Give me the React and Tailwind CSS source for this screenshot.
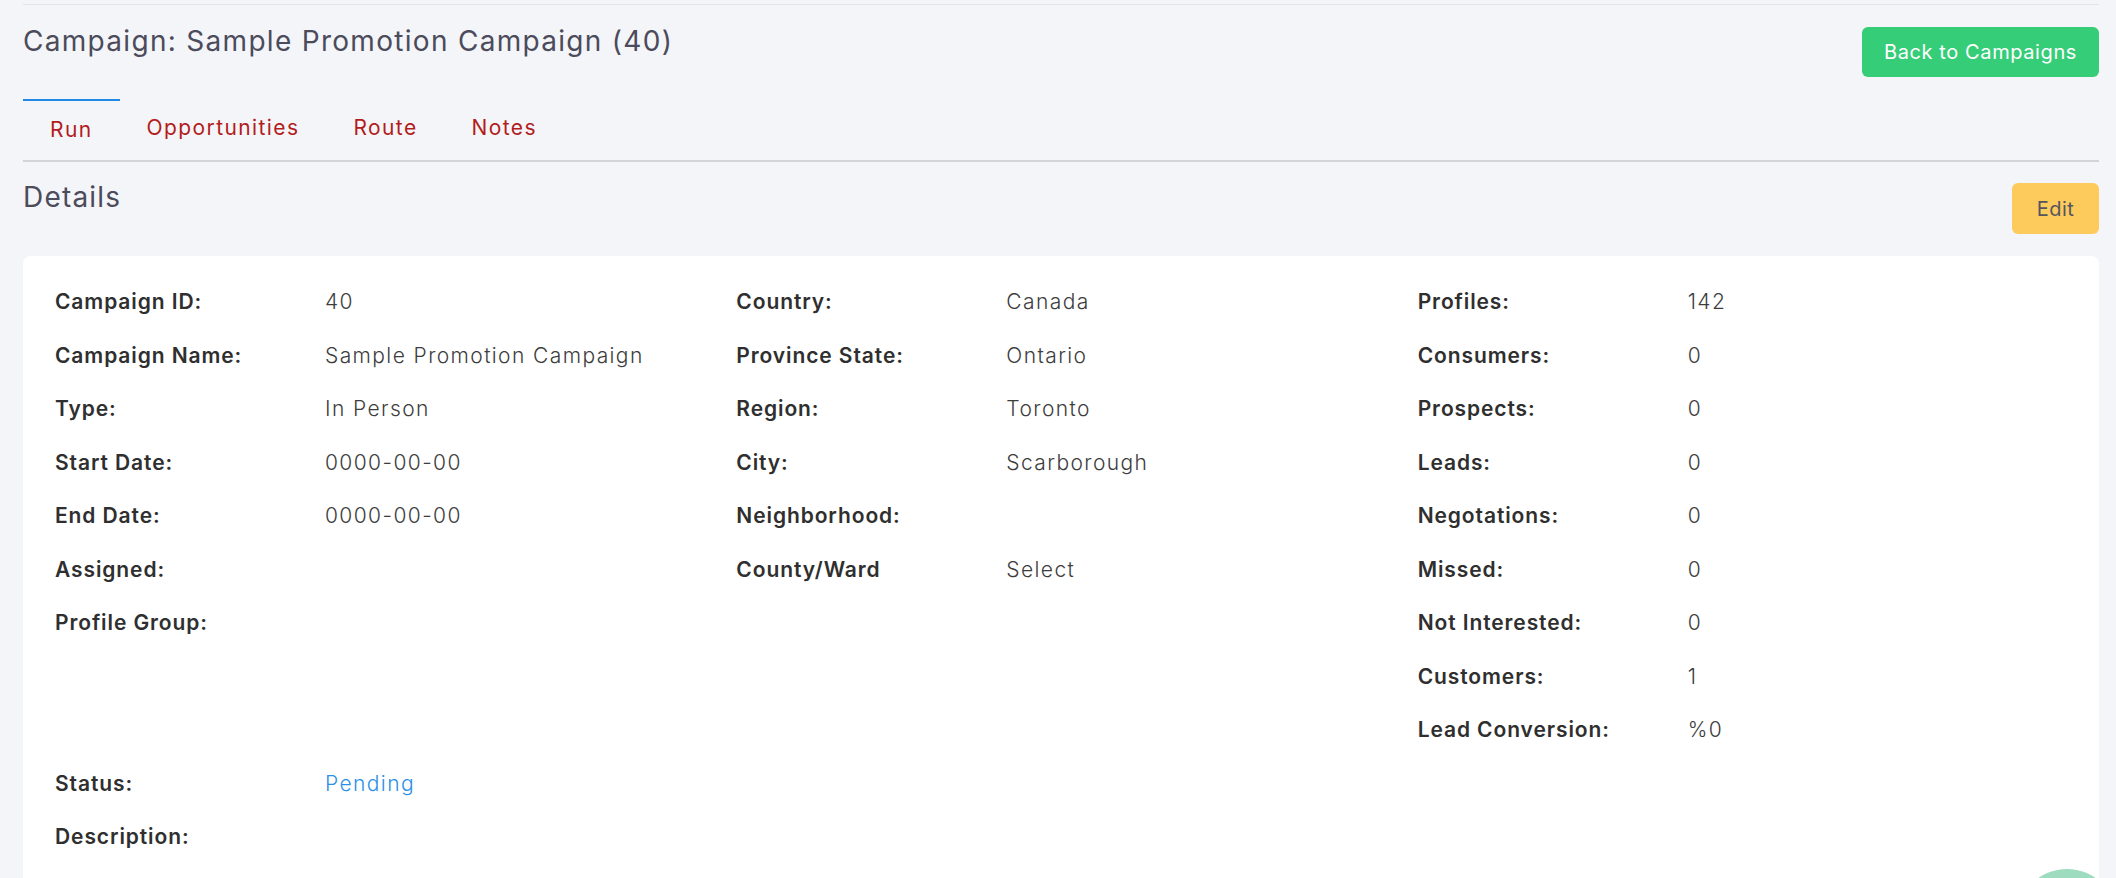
import React from 'react';

const col1 = [
  ['Campaign ID:', '40'],
  ['Campaign Name:', 'Sample Promotion Campaign'],
  ['Type:', 'In Person'],
  ['Start Date:', '0000-00-00'],
  ['End Date:', '0000-00-00'],
  ['Assigned:', ''],
  ['Profile Group:', ''],
];

const col2 = [
  ['Country:', 'Canada'],
  ['Province State:', 'Ontario'],
  ['Region:', 'Toronto'],
  ['City:', 'Scarborough'],
  ['Neighborhood:', ''],
  ['County/Ward', 'Select'],
];

const col3 = [
  ['Profiles:', '142'],
  ['Consumers:', '0'],
  ['Prospects:', '0'],
  ['Leads:', '0'],
  ['Negotations:', '0'],
  ['Missed:', '0'],
  ['Not Interested:', '0'],
  ['Customers:', '1'],
  ['Lead Conversion:', '%0'],
];

const tabs = ['Run', 'Opportunities', 'Route', 'Notes'];

function Row({ label, value, valueClass = 'text-[#3d3d3d]' }) {
  return (
    <div className="grid grid-cols-[270px_1fr] items-center h-[53.5px]">
      <div className="text-[21px] tracking-[0.9px] font-semibold text-[#2f2f2f]">{label}</div>
      <div className={`text-[21px] tracking-[1.4px] font-light ${valueClass}`}>{value}</div>
    </div>
  );
}

function Column({ rows }) {
  return (
    <div className="px-4">
      {rows.map(([label, value]) => (
        <Row key={label} label={label} value={value} />
      ))}
    </div>
  );
}

export default function App() {
  return (
    <div className="relative min-h-screen overflow-hidden bg-[#f4f5f8] font-['Inter','Liberation_Sans',sans-serif]">
      <div className="pl-[23px] pr-[17px]">
        <div className="h-[4px]" />
        <div className="border-t border-[#e4e5e9]" />

        {/* header */}
        <div className="flex justify-between items-start">
          <h1 className="mt-[19px] text-[28px] leading-[34px] tracking-[1.3px] font-normal text-[#4b4b5c]">
            Campaign: Sample Promotion Campaign (40)
          </h1>
          <button className="mt-[22px] h-[50px] w-[237px] rounded-[6px] bg-[#35cd78] text-white text-[20px] tracking-[0.6px]">
            Back to Campaigns
          </button>
        </div>

        {/* tabs */}
        <div className="mt-[22px] flex border-b-2 border-[#d4d4d8]">
          {tabs.map((t, i) => (
            <div
              key={t}
              className={`h-[61px] flex items-center px-[27px] pb-[5px] text-[21px] tracking-[1.4px] text-[#b31c1c] border-t-2 ${
                i === 0 ? 'border-[#2189e3]' : 'border-transparent'
              }`}
            >
              <span className={i === 0 ? 'mt-[3px]' : ''}>{t}</span>
            </div>
          ))}
        </div>

        {/* details header */}
        <div className="mt-[20px] flex justify-between items-start">
          <h2 className="mt-[-2px] text-[28px] leading-[34px] tracking-[1.2px] text-[#4b4b5c]">Details</h2>
          <button className="mt-[1px] h-[51px] w-[87px] rounded-[6px] bg-[#fccb5c] text-[#555560] text-[20px] tracking-[0.5px]">
            Edit
          </button>
        </div>

        {/* card */}
        <div className="mt-[22px] rounded-[8px] bg-white px-4 pt-[19px] pb-10">
          <div className="grid grid-cols-3">
            <Column rows={col1} />
            <Column rows={col2} />
            <Column rows={col3} />
          </div>
          <div className="grid grid-cols-3">
            <div className="px-4">
              <Row label="Status:" value="Pending" valueClass="text-[#2a8fe8]" />
              <Row label="Description:" value="" />
            </div>
          </div>
        </div>
      </div>

      {/* floating button */}
      <div className="absolute left-[2017px] top-[869px] w-[100px] h-[100px] rounded-full bg-[#9edcc0]" />
    </div>
  );
}
